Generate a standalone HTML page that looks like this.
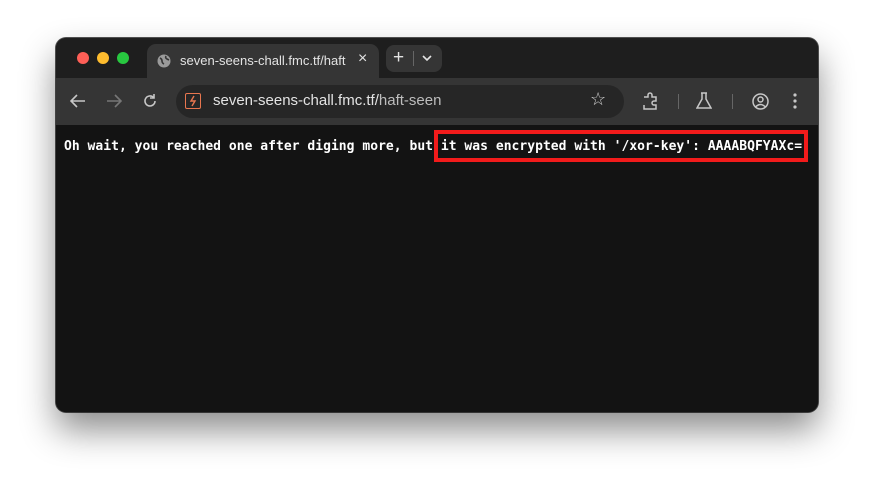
<!DOCTYPE html>
<html><head><meta charset="utf-8"><style>
html,body{margin:0;padding:0;width:874px;height:487px;background:#fff;overflow:hidden;font-family:"Liberation Sans",sans-serif}
.win{position:absolute;left:56px;top:38px;width:762px;height:374px;border-radius:10px;background:#131313;overflow:hidden;box-shadow:0 18px 35px rgba(0,0,0,.45),0 0 0 1px #555}
.tabs{position:absolute;left:0;top:0;width:762px;height:40px;background:#1e1e1e}
.dot{position:absolute;top:14px;width:12px;height:12px;border-radius:50%}
.tab{position:absolute;left:91px;top:6px;width:232px;height:34px;background:#353535;border-radius:9px 9px 0 0}
.tb{position:absolute;left:0;top:40px;width:762px;height:47px;background:#353535}
.url{position:absolute;left:120px;top:7px;width:448px;height:33px;border-radius:17px;background:#262626}
.t{color:#e3e3e3;font-size:14px;position:absolute}
.content{position:absolute;left:0;top:87px;width:762px;height:287px;background:#131313}
.txt{position:absolute;left:8px;top:14px;font-family:"DejaVu Sans Mono","Liberation Mono",monospace;font-weight:bold;font-size:13px;color:#fff;white-space:pre;letter-spacing:0.025px}
.box{position:absolute;left:378px;top:5px;width:366px;height:24px;border:4px solid #f21b1b}
</style></head><body>
<div class="win">
 <div class="tabs">
  <div class="dot" style="left:21px;background:#fe5f57"></div>
  <div class="dot" style="left:41px;background:#febc2e"></div>
  <div class="dot" style="left:61px;background:#28c840"></div>
  <div class="tab">
   <svg style="position:absolute;left:10px;top:10px" width="14" height="14" viewBox="0 0 14 14"><circle cx="7" cy="7" r="6.5" fill="#9a9a9a"/><path d="M3 4q2 1 2 3t2 3M9 2q-1 2 1 3t2 1" stroke="#353535" stroke-width="1.6" fill="none"/></svg>
   <div class="t" style="left:33px;top:9px;font-size:13px;width:170px;overflow:hidden;white-space:nowrap">seven-seens-chall.fmc.tf/haft</div>
   <div class="t" style="left:211px;top:6px;font-size:16px">×</div>
  </div>
  <div style="position:absolute;left:330px;top:7px;width:56px;height:27px;border-radius:8px;background:#353535">
   <div class="t" style="left:7px;top:2px;font-size:19px">+</div>
   <div style="position:absolute;left:27px;top:6px;width:1px;height:15px;background:#666"></div>
   <svg style="position:absolute;left:36px;top:10px" width="10" height="7"><path d="M1 1l4 4 4-4" stroke="#e3e3e3" stroke-width="1.6" fill="none"/></svg>
  </div>
 </div>
 <div class="tb">
  <svg style="position:absolute;left:14px;top:16px" width="16" height="14"><path d="M15 7H2M7 1L1 7l6 6" stroke="#c7c7c7" stroke-width="1.6" fill="none"/></svg>
  <svg style="position:absolute;left:50px;top:16px" width="16" height="14"><path d="M1 7h13M9 1l6 6-6 6" stroke="#777" stroke-width="1.6" fill="none"/></svg>
  <svg style="position:absolute;left:86px;top:15px" width="16" height="16"><path d="M13 8a5 5 0 1 1-1.5-3.6" stroke="#c7c7c7" stroke-width="1.6" fill="none"/><path d="M12 1v4H8" stroke="#c7c7c7" stroke-width="1.6" fill="none"/></svg>
  <div class="url">
   <div style="position:absolute;left:9px;top:8px;width:14px;height:14px;border:1.5px solid #e8764f;border-radius:2px"></div>
   <svg style="position:absolute;left:12px;top:10px" width="10" height="12"><path d="M6 1L3 6h4l-3 5" stroke="#e8764f" stroke-width="1.4" fill="none"/></svg>
   <div class="t" style="left:37px;top:7px;font-size:15px">seven-seens-chall.fmc.tf/<span style="color:#bdbdbd">haft-seen</span></div>
   <div class="t" style="left:414px;top:4px;font-size:18px;color:#d0d0d0">☆</div>
  </div>
  <svg style="position:absolute;left:585px;top:14px" width="18" height="18"><path d="M3 5h4V3a2 2 0 0 1 4 0v2h4v4h-2a2 2 0 0 0 0 4h2v4H3v-4" stroke="#c7c7c7" stroke-width="1.5" fill="none"/></svg>
  <div style="position:absolute;left:622px;top:16px;width:1px;height:15px;background:#666"></div>
  <svg style="position:absolute;left:640px;top:14px" width="16" height="18"><path d="M5 1h6M6 1v6L1 16h14L10 7V1" stroke="#c7c7c7" stroke-width="1.5" fill="none"/></svg>
  <div style="position:absolute;left:676px;top:16px;width:1px;height:15px;background:#666"></div>
  <svg style="position:absolute;left:696px;top:15px" width="17" height="17"><circle cx="8.5" cy="8.5" r="7.5" stroke="#c7c7c7" stroke-width="1.5" fill="none"/><circle cx="8.5" cy="6.5" r="2.5" stroke="#c7c7c7" stroke-width="1.5" fill="none"/><path d="M3.5 14q5-5 10 0" stroke="#c7c7c7" stroke-width="1.5" fill="none"/></svg>
  <svg style="position:absolute;left:737px;top:15px" width="4" height="16"><circle cx="2" cy="2" r="1.6" fill="#c7c7c7"/><circle cx="2" cy="8" r="1.6" fill="#c7c7c7"/><circle cx="2" cy="14" r="1.6" fill="#c7c7c7"/></svg>
 </div>
 <div class="content">
  <div class="box"></div>
  <div class="txt">Oh wait, you reached one after diging more, but it was encrypted with '/xor-key': AAAABQFYAXc=</div>
 </div>
</div>
</body></html>
